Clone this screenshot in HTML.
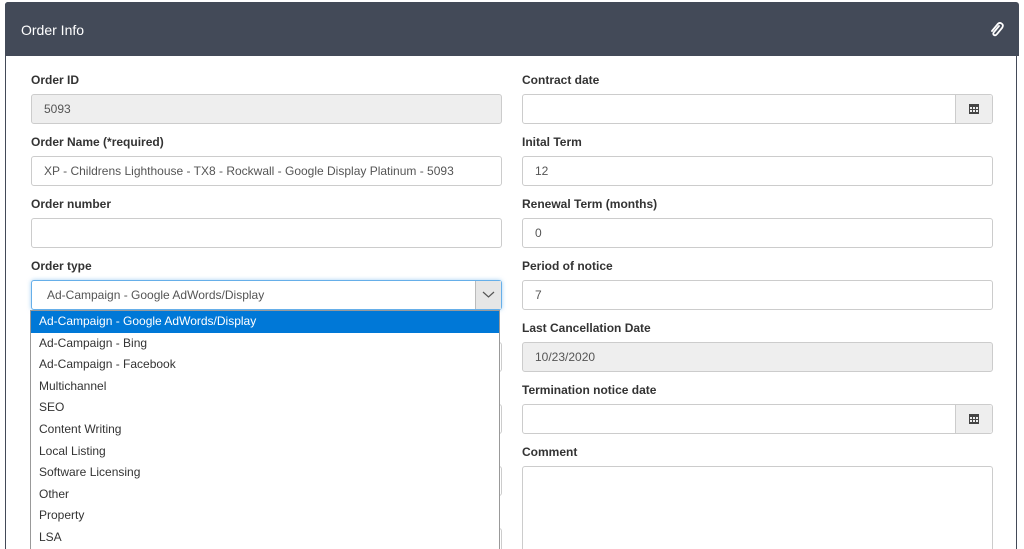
<!DOCTYPE html>
<html><head><style>
html,body{margin:0;width:1024px;height:549px;overflow:hidden}
body{background:#fff;font-family:"Liberation Sans",Arial,sans-serif;font-size:12px;color:#333;position:relative}
.panel{position:absolute;left:5px;top:2px;width:1012px;height:547px;border:1px solid #434a58;border-bottom:none;border-radius:3px 3px 0 0;box-sizing:border-box}
.hdr{position:absolute;left:5px;top:2px;width:1014px;height:54px;background:#434a58;border-radius:3px 3px 0 0;color:#fff;font-size:14px}
.hdr span{position:absolute;left:16px;top:20px}
.lbl{position:absolute;font-weight:bold;font-size:12px;color:#333}
.in{position:absolute;box-sizing:border-box;height:30px;border:1px solid #ccc;border-radius:3px;background:#fff;padding:7px 12px;font-size:12px;color:#555}
.ro{background:#eee}
.cal{position:absolute;right:0;top:0;width:36px;height:28px;background:#eee;border-left:1px solid #ccc;border-radius:0 3px 3px 0}
.list{position:absolute;left:30px;top:310px;width:470px;height:239px;overflow:hidden;background:#fff;border:1px solid #999;border-bottom:none;box-sizing:border-box}
.list div{height:21.6px;line-height:21.6px;padding-left:8px;font-size:12px;color:#333}
.list .sel{background:#0078d7;color:#fff}
</style></head><body>
<div class="panel"></div>
<div class="hdr"><span>Order Info</span>
<svg style="position:absolute;left:985px;top:20px" width="14" height="16" viewBox="0 0 14 16"><path d="M9 4 L4 10 Q2.5 12 4 13 Q5.5 14 7 12 L12 6 Q14 3 11.5 1.5 Q9 0 7 3 L2 9" fill="none" stroke="#fff" stroke-width="1.8" stroke-linecap="round"/></svg></div>

<div class="lbl" style="left:31px;top:73px">Order ID</div>
<div class="in ro" style="left:31px;top:94px;width:471px">5093</div>
<div class="lbl" style="left:31px;top:135px">Order Name (*required)</div>
<div class="in" style="left:31px;top:156px;width:471px">XP - Childrens Lighthouse - TX8 - Rockwall - Google Display Platinum - 5093</div>
<div class="lbl" style="left:31px;top:197px">Order number</div>
<div class="in" style="left:31px;top:218px;width:471px"></div>
<div class="lbl" style="left:31px;top:259px">Order type</div>
<div class="in" style="left:31px;top:280px;width:471px;border-color:#66afe9;box-shadow:0 0 4px rgba(102,175,233,.6);padding-left:15px">Ad-Campaign - Google AdWords/Display
<div style="position:absolute;right:0;top:0;width:25px;height:28px;background:#e6e6e6;border-left:1px solid #bbb"><svg width="25" height="28"><path d="M7 11 L12.5 16 L18 11" fill="none" stroke="#555" stroke-width="1.2"/></svg></div></div>
<div class="in" style="left:31px;top:342px;width:471px"></div>
<div class="in" style="left:31px;top:404px;width:471px"></div>
<div class="in" style="left:31px;top:466px;width:471px"></div>
<div class="in" style="left:31px;top:528px;width:471px;height:21px;border-bottom:none;border-radius:3px 3px 0 0"></div>

<div class="lbl" style="left:522px;top:73px">Contract date</div>
<div class="in" style="left:522px;top:94px;width:471px"><div class="cal"><svg style="position:absolute;left:13px;top:8px" width="10" height="11"><rect x="0" y="1" width="10" height="10" fill="#444"/><g fill="#eee"><rect x="1" y="4" width="2" height="2"/><rect x="4" y="4" width="2" height="2"/><rect x="7" y="4" width="2" height="2"/><rect x="1" y="7" width="2" height="2"/><rect x="4" y="7" width="2" height="2"/><rect x="7" y="7" width="2" height="2"/></g></svg></div></div>
<div class="lbl" style="left:522px;top:135px">Inital Term</div>
<div class="in" style="left:522px;top:156px;width:471px">12</div>
<div class="lbl" style="left:522px;top:197px">Renewal Term (months)</div>
<div class="in" style="left:522px;top:218px;width:471px">0</div>
<div class="lbl" style="left:522px;top:259px">Period of notice</div>
<div class="in" style="left:522px;top:280px;width:471px">7</div>
<div class="lbl" style="left:522px;top:321px">Last Cancellation Date</div>
<div class="in ro" style="left:522px;top:342px;width:471px">10/23/2020</div>
<div class="lbl" style="left:522px;top:383px">Termination notice date</div>
<div class="in" style="left:522px;top:404px;width:471px"><div class="cal"><svg style="position:absolute;left:13px;top:8px" width="10" height="11"><rect x="0" y="1" width="10" height="10" fill="#444"/><g fill="#eee"><rect x="1" y="4" width="2" height="2"/><rect x="4" y="4" width="2" height="2"/><rect x="7" y="4" width="2" height="2"/><rect x="1" y="7" width="2" height="2"/><rect x="4" y="7" width="2" height="2"/><rect x="7" y="7" width="2" height="2"/></g></svg></div></div>
<div class="lbl" style="left:522px;top:445px">Comment</div>
<div class="in" style="left:522px;top:466px;width:471px;height:83px;border-bottom:none;border-radius:3px 3px 0 0"></div>

<div class="list">
<div class="sel">Ad-Campaign - Google AdWords/Display</div>
<div>Ad-Campaign - Bing</div>
<div>Ad-Campaign - Facebook</div>
<div>Multichannel</div>
<div>SEO</div>
<div>Content Writing</div>
<div>Local Listing</div>
<div>Software Licensing</div>
<div>Other</div>
<div>Property</div>
<div>LSA</div>
</div>
</body></html>
